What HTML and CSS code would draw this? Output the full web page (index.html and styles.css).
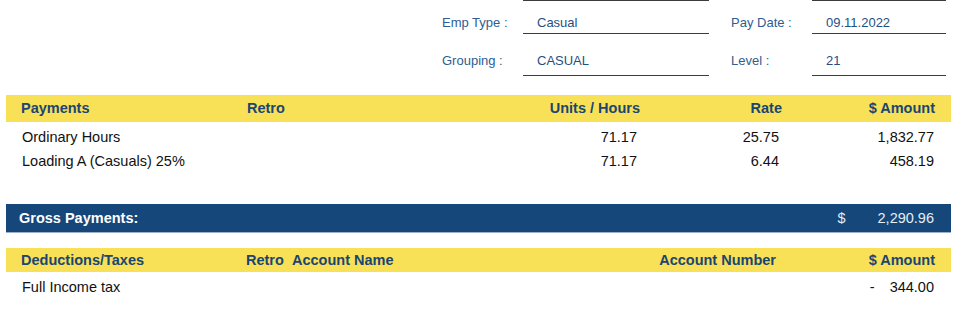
FILE: index.html
```html
<!DOCTYPE html>
<html>
<head>
<meta charset="utf-8">
<link rel="stylesheet" href="styles.css">
</head>
<body>
<div class="page">
  <div class="info">
    <div class="lbl r1">Emp Type :</div>
    <div class="val r1">Casual</div>
    <div class="sp"></div>
    <div class="lbl r1">Pay Date :</div>
    <div class="val r1">09.11.2022</div>
    <div class="lbl r2">Grouping :</div>
    <div class="val r2">CASUAL</div>
    <div class="sp"></div>
    <div class="lbl r2">Level :</div>
    <div class="val r2">21</div>
  </div>

  <div class="pay-head">
    <div class="c1">Payments</div>
    <div>Retro</div>
    <div class="num">Units / Hours</div>
    <div class="num">Rate</div>
    <div class="num">$ Amount</div>
  </div>
  <div class="pay-rows">
    <div class="pay-row">
      <div class="c1">Ordinary Hours</div>
      <div></div>
      <div class="num">71.17</div>
      <div class="num">25.75</div>
      <div class="num">1,832.77</div>
    </div>
    <div class="pay-row">
      <div class="c1">Loading A (Casuals) 25%</div>
      <div></div>
      <div class="num">71.17</div>
      <div class="num">6.44</div>
      <div class="num">458.19</div>
    </div>
  </div>

  <div class="gross">
    <div class="gross-label">Gross Payments:</div>
    <div class="gross-cur">$</div>
    <div class="gross-amt">2,290.96</div>
  </div>

  <div class="ded-head">
    <div class="c1">Deductions/Taxes</div>
    <div>Retro</div>
    <div>Account Name</div>
    <div class="num">Account Number</div>
    <div class="num">$ Amount</div>
  </div>
  <div class="ded-rows">
    <div class="ded-row">
      <div class="c1">Full Income tax</div>
      <div></div>
      <div></div>
      <div></div>
      <div class="num"><span class="sign">-</span>344.00</div>
    </div>
  </div>
</div>
</body>
</html>
```

FILE: styles.css
```css
html, body {
  margin: 0;
  padding: 0;
  background: #ffffff;
}

body {
  font-family: "Liberation Sans", Arial, sans-serif;
  color: #111111;
}

.page {
  width: 945px;
  margin-left: 6px;
}

/* top info block */
.info {
  display: grid;
  grid-template-columns: 81px 186px 22px 81px 134px;
  grid-template-rows: 34px 42px;
  margin-left: 436px;
  font-size: 13px;
  line-height: 15px;
}

.info > div {
  box-sizing: border-box;
}

.lbl {
  color: #2f5d92;
}

.val {
  color: #1f4f83;
  padding-left: 14px;
  border-bottom: 1px solid #3c3c3c;
}

.lbl.r1 { padding-top: 15px; }
.val.r1 { padding-top: 14px; border-top: 1px solid #3c3c3c; }
.lbl.r2, .val.r2 { padding-top: 19px; }

/* payments */
.pay-head,
.pay-row {
  display: grid;
  grid-template-columns: 241px 150px 1fr 142px 153px;
  font-size: 14.5px;
}

.pay-head {
  margin-top: 19px;
  height: 27px;
  line-height: 27px;
  background: #f8e157;
  color: #1b4572;
  font-weight: bold;
  padding-right: 16px;
}

.pay-head .c1,
.ded-head .c1 {
  padding-left: 15px;
}

.num {
  text-align: right;
}

.pay-rows {
  padding-top: 3px;
}

.pay-row {
  line-height: 24px;
  padding-right: 17px;
}

.pay-row .c1,
.ded-row .c1 {
  padding-left: 16px;
  white-space: nowrap;
}

.pay-row > .num:nth-child(3),
.pay-row > .num:nth-child(4) {
  padding-right: 2px;
}

/* gross payments bar */
.gross {
  display: flex;
  align-items: center;
  margin-top: 31px;
  height: 29px;
  line-height: 29px;
  background: #15477a;
  border-bottom: 1px solid #9db0c6;
  box-sizing: border-box;
  padding: 0 17px 0 13px;
  font-size: 14.5px;
  color: #ffffff;
}

.gross-label {
  flex: 1;
  font-weight: bold;
}

.gross-cur {
  color: #e6edf5;
  margin-right: 32px;
}

.gross-amt {
  color: #e6edf5;
}

/* deductions */
.ded-head,
.ded-row {
  display: grid;
  grid-template-columns: 240px 46px 1fr auto 159px;
  font-size: 14.5px;
}

.ded-head {
  margin-top: 15px;
  height: 24px;
  line-height: 24px;
  background: #f8e157;
  color: #1b4572;
  font-weight: bold;
  padding-right: 16px;
}

.ded-rows {
  padding-top: 3px;
}

.ded-row {
  line-height: 24px;
  padding-right: 17px;
}

.sign {
  margin-right: 15px;
}
```
